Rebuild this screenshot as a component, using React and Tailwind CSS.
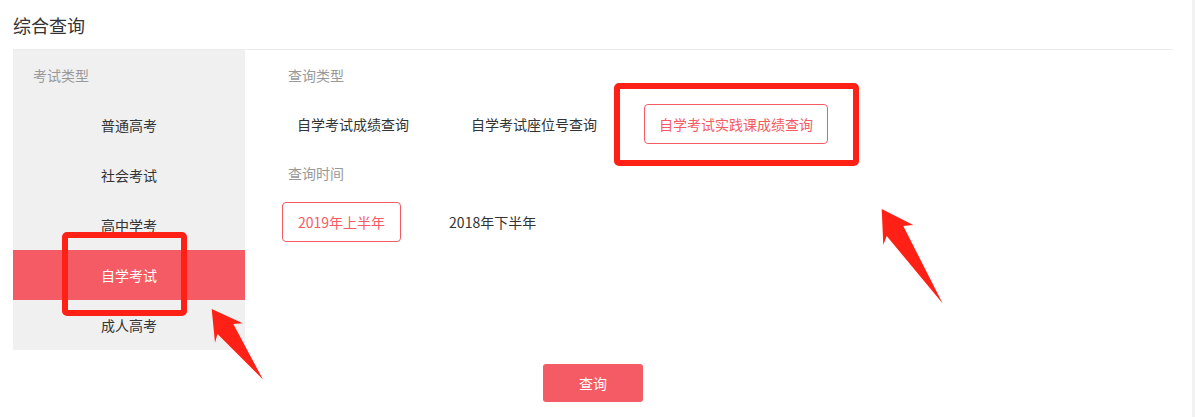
import { useState } from "react";

const EXAM_TYPES = ["普通高考", "社会考试", "高中学考", "自学考试", "成人高考"];
const QUERY_TYPES = ["自学考试成绩查询", "自学考试座位号查询", "自学考试实践课成绩查询"];
const TERMS = ["2019年上半年", "2018年下半年"];

const FONT = { fontFamily: '"Microsoft YaHei", "Noto Sans CJK SC", "Noto Sans", sans-serif' };

export default function App() {
  const [exam, setExam] = useState(3);
  const [query, setQuery] = useState(2);
  const [term, setTerm] = useState(0);

  return (
    <div className="relative flex w-[1195px] h-[417px] bg-white text-[#333] overflow-hidden" style={FONT}>
      <div className="flex-1 pl-[13px] pr-[19px]">
        {/* Title */}
        <div className="h-[49px] flex items-center text-[18px] leading-none pt-px">综合查询</div>
        <div className="h-px bg-[#ececec]" />

        <div className="flex">
          {/* Sidebar */}
          <aside className="w-[232px] h-[300px] bg-[#f0f0f0] shrink-0">
            <div className="h-[50px] flex items-center pl-[20px] text-[14px] text-[#999]">考试类型</div>
            {EXAM_TYPES.map((t, i) => (
              <div
                key={t}
                onClick={() => setExam(i)}
                className={
                  "h-[50px] flex items-center justify-center text-[14px] cursor-pointer " +
                  (i === exam ? "bg-[#f55b64] text-white" : "text-[#333]")
                }
              >
                {t}
              </div>
            ))}
          </aside>

          {/* Panel */}
          <div className="flex-1 pl-[37px]">
            <div className="h-[50px] flex items-center pl-[6px] text-[14px] text-[#999]">查询类型</div>
            <div className="flex gap-[32px] mt-[4px]">
              {QUERY_TYPES.map((q, i) => (
                <div
                  key={q}
                  onClick={() => setQuery(i)}
                  className={
                    "h-[40px] flex items-center px-[14px] border rounded-[4px] text-[14px] cursor-pointer whitespace-nowrap " +
                    (i === query ? "border-[#f55b64] text-[#f55b64]" : "border-transparent text-[#333]")
                  }
                >
                  {q}
                </div>
              ))}
            </div>
            <div className="h-[58px] flex items-center pl-[6px] text-[14px] text-[#999]">查询时间</div>
            <div className="flex gap-[32px]">
              {TERMS.map((t, i) => (
                <div
                  key={t}
                  onClick={() => setTerm(i)}
                  className={
                    "h-[40px] flex items-center px-[15px] border rounded-[4px] text-[14px] cursor-pointer " +
                    (i === term ? "border-[#f55b64] text-[#f55b64]" : "border-transparent text-[#333]")
                  }
                >
                  {t}
                </div>
              ))}
            </div>
          </div>
        </div>

        {/* Submit */}
        <div className="flex justify-center mt-[14px]">
          <button className="w-[100px] h-[38px] rounded-[3px] bg-[#f55b64] text-white text-[14px]">查询</button>
        </div>
      </div>
      <div className="w-[3px] bg-[#f2f2f2]" />

      {/* Annotations */}
      <div className="absolute left-[62px] top-[232px] w-[125px] h-[84px] border-[6px] border-[#ff2116] rounded-[5px] pointer-events-none" />
      <div className="absolute left-[614px] top-[83px] w-[245px] h-[83px] border-[6px] border-[#ff2116] rounded-[5px] pointer-events-none" />
      <svg className="absolute inset-0 pointer-events-none" width="1195" height="417" viewBox="0 0 1195 417">
        <polygon fill="#ff2116" points="211.7,309 242.7,323.3 233.3,324 263,379.5 217.5,334 215,342.7" />
        <polygon fill="#ff2116" points="881.7,209 913.3,225 903.3,226 942.7,303.5 886.7,236 883.3,245" />
      </svg>
    </div>
  );
}
